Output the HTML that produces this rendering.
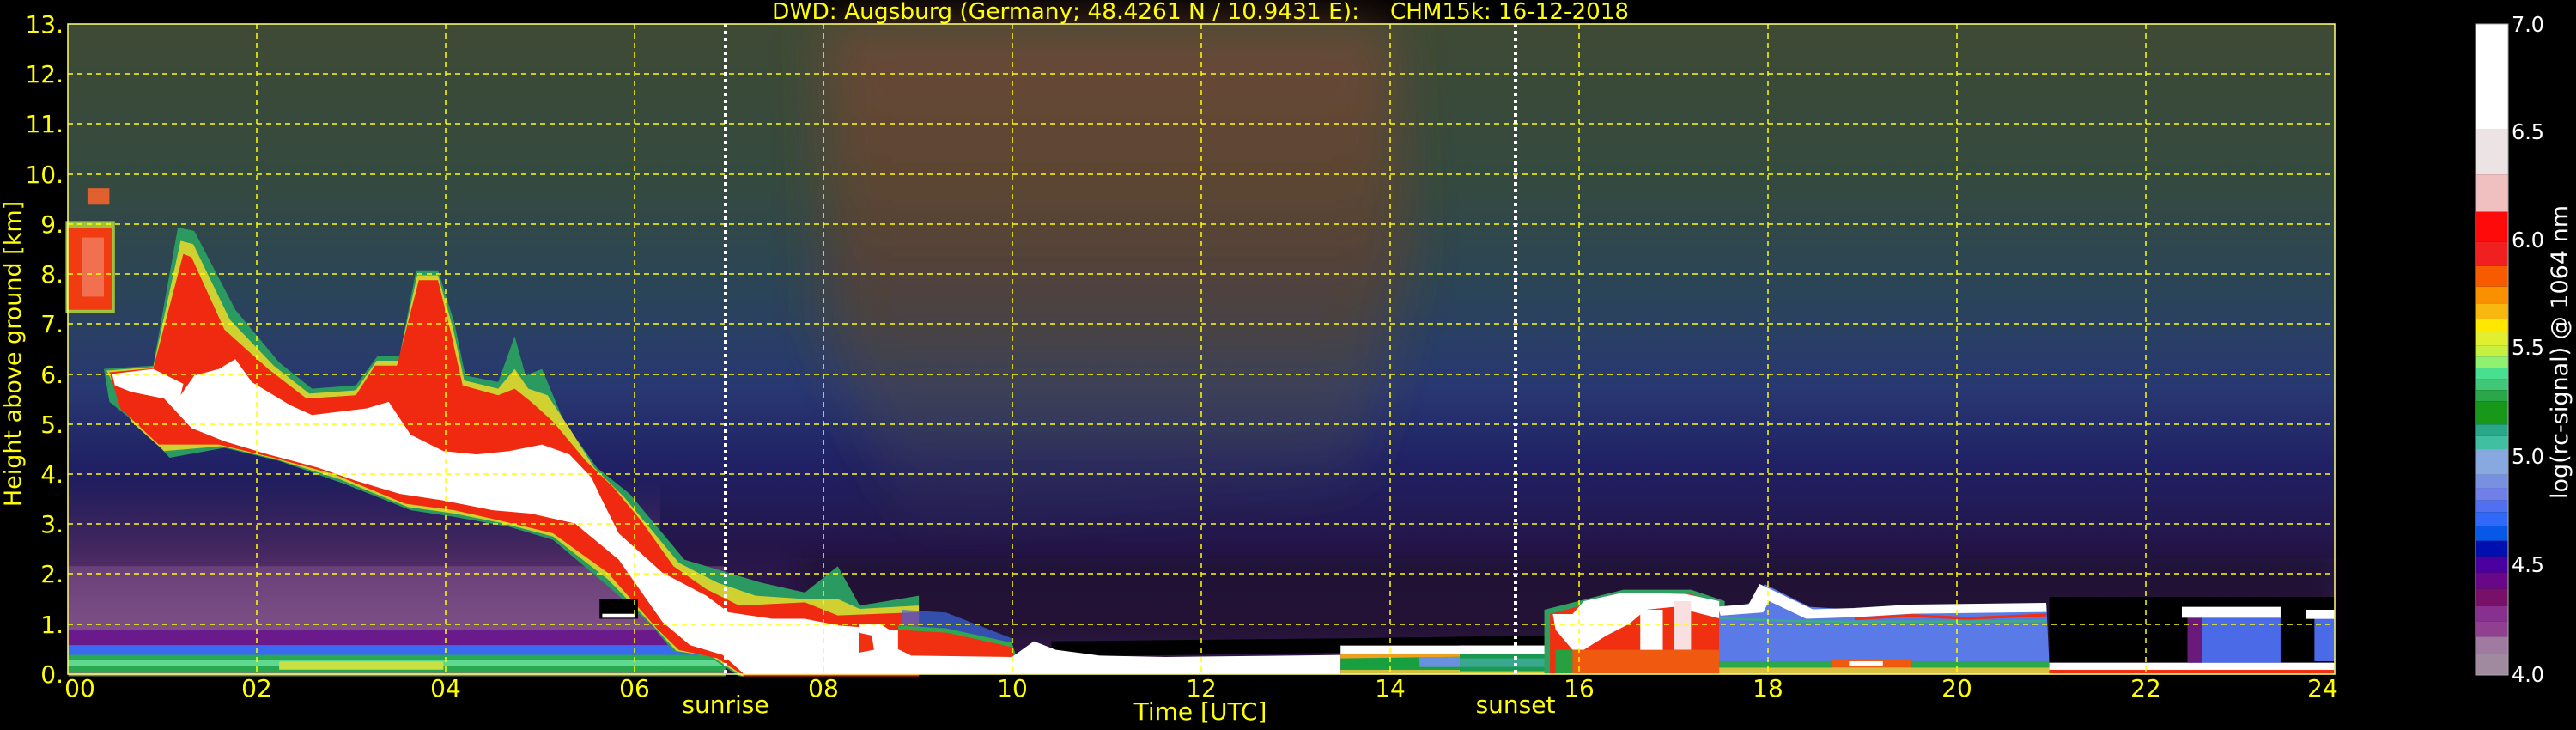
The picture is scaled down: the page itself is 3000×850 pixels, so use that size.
<!DOCTYPE html>
<html><head><meta charset="utf-8"><style>
html,body{margin:0;padding:0;background:#000;}
svg{display:block;}
text{font-family:"DejaVu Sans","Liberation Sans",sans-serif;}
</style></head><body>
<svg width="3000" height="850" viewBox="0 0 3000 850" xmlns="http://www.w3.org/2000/svg">
<defs>
<linearGradient id="bg" x1="0" y1="28" x2="0" y2="785" gradientUnits="userSpaceOnUse">
<stop offset="0" stop-color="#3e4a34"/>
<stop offset="0.25" stop-color="#344a40"/>
<stop offset="0.42" stop-color="#2a445a"/>
<stop offset="0.56" stop-color="#283872"/>
<stop offset="0.68" stop-color="#202064"/>
<stop offset="0.8" stop-color="#24164a"/>
<stop offset="0.9" stop-color="#32184a"/>
<stop offset="1" stop-color="#32184a"/>
</linearGradient>
<linearGradient id="pink" x1="0" y1="560" x2="0" y2="760" gradientUnits="userSpaceOnUse">
<stop offset="0" stop-color="#5a3a7a" stop-opacity="0"/>
<stop offset="0.5" stop-color="#6a3a78" stop-opacity="0.6"/>
<stop offset="1" stop-color="#8a5a92" stop-opacity="0.9"/>
</linearGradient>
<linearGradient id="redt" x1="0" y1="28" x2="0" y2="640" gradientUnits="userSpaceOnUse">
<stop offset="0" stop-color="#7a4a38" stop-opacity="0.75"/>
<stop offset="0.5" stop-color="#6e3e24" stop-opacity="0.55"/>
<stop offset="0.8" stop-color="#5a5a30" stop-opacity="0.25"/>
<stop offset="1" stop-color="#4a5a40" stop-opacity="0"/>
</linearGradient>
<filter id="blur" x="-10%" y="-10%" width="120%" height="120%"><feGaussianBlur stdDeviation="30"/></filter>
<filter id="b2" x="-10%" y="-50%" width="120%" height="200%"><feGaussianBlur stdDeviation="12"/></filter>
</defs>

<rect x="79" y="28" width="2640" height="757" fill="url(#bg)"/>
<polygon points="960,28 1620,28 1640,300 1580,560 1060,620 960,380" fill="url(#redt)" filter="url(#blur)"/>
<rect x="79" y="560" width="690" height="225" fill="url(#pink)"/>
<rect x="930" y="650" width="1790" height="100" fill="#140a22" opacity="0.5" filter="url(#b2)"/>

<g transform="translate(70,200) scale(0.6378,0.3827)">
 <rect x="15" y="1200" width="1200" height="240" fill="#8a5a92" opacity="0.45"/>
 <rect x="15" y="1395" width="1200" height="55" fill="#6a1a8a"/>
 <rect x="15" y="1440" width="1200" height="35" fill="#3a6af0"/>
 <rect x="15" y="1470" width="1200" height="50" fill="#28a850"/>
 <rect x="15" y="1485" width="1200" height="20" fill="#60d890"/>
 <rect x="400" y="1490" width="300" height="25" fill="#c8e040"/>
 <rect x="15" y="1520" width="1200" height="15" fill="#6a8a60"/>
 <rect x="10" y="150" width="90" height="280" fill="#a0c040"/>
 <rect x="15" y="170" width="80" height="250" fill="#f03c10"/>
 <rect x="40" y="200" width="40" height="180" fill="#f07050"/>
 <rect x="50" y="50" width="40" height="50" fill="#e06030"/>
 <polygon fill="#2a9a60" points="80,600 170,590 215,170 245,180 320,420 400,580 460,660 540,650 580,560 620,560 650,300 690,300 720,460 740,620 800,640 830,500 850,620 880,600 920,760 980,900 1040,980 1080,1060 1140,1180 1220,1220 1280,1250 1360,1280 1420,1200 1460,1320 1568,1290 1568,1535 1240,1535 1180,1470 1120,1460 1080,1380 1000,1260 900,1120 820,1080 720,1050 640,1030 520,950 400,880 300,840 200,870 150,780 90,700"/>
 <polygon fill="#d0d030" points="85,605 170,594 220,210 243,220 310,450 390,590 455,675 540,665 578,575 618,575 652,315 690,315 718,480 738,635 800,660 830,600 855,660 890,680 930,780 975,900 1030,990 1070,1070 1130,1190 1200,1250 1270,1290 1360,1300 1420,1300 1460,1330 1568,1320 1568,1535 1245,1535 1190,1475 1125,1458 1085,1385 1000,1240 900,1110 810,1070 720,1040 635,1020 510,935 395,875 295,835 190,850 130,760"/>
 <polygon fill="#f02a10" points="90,610 170,598 225,250 240,260 300,480 380,600 450,690 540,680 575,590 615,590 655,330 690,330 715,500 735,650 800,680 830,660 860,700 900,760 960,880 1010,960 1060,1060 1120,1200 1180,1270 1240,1320 1360,1310 1420,1350 1568,1340 1568,1535 1250,1535 1200,1480 1130,1455 1090,1390 1000,1220 900,1100 800,1060 720,1030 630,1010 500,920 390,870 290,830 180,830 110,720"/>
 <polygon fill="#ffffff" points="95,615 170,600 225,645 220,680 245,620 290,600 320,570 350,640 420,710 460,740 560,720 600,700 640,800 700,850 760,860 820,850 880,830 930,860 970,930 990,1000 1020,1100 1060,1160 1100,1220 1180,1290 1220,1340 1300,1360 1360,1360 1420,1380 1568,1400 1568,1530 1250,1530 1210,1470 1150,1440 1100,1370 1020,1180 940,1070 860,1040 790,1030 700,1000 620,980 540,940 470,900 380,860 300,820 240,780 190,690 130,670 100,650"/>
 <rect x="985" y="1300" width="70" height="60" fill="#000"/>
 <rect x="990" y="1345" width="60" height="12" fill="#fff"/>
</g>

<g transform="translate(1000,600) scale(0.5102,0.3333)">
 <polygon fill="#3a6ae0" points="100,330 200,340 350,430 350,470 100,440" opacity="0.7"/>
 <polygon fill="#000" points="440,440 1100,430 1568,420 1568,460 1100,480 440,495"/>
 <polygon fill="#30a850" points="90,385 200,395 350,445 360,495 90,490"/>
 <polygon fill="#f03010" points="90,400 200,410 350,460 355,495 90,495"/>
 <polygon fill="#f03010" points="0,395 40,400 40,490 0,495"/>
 <polygon fill="#ffffff" points="0,380 50,380 90,420 80,460 120,490 350,495 400,440 450,470 550,490 700,495 1100,488 1100,555 0,555"/>
 <polygon fill="#f03010" points="0,410 30,420 35,470 0,480"/>
 <rect x="1100" y="455" width="468" height="30" fill="#ffffff"/>
 <polygon fill="#f0a020" points="1100,485 1568,485 1568,500 1100,520"/>
 <polygon fill="#18a040" points="1100,500 1568,490 1568,545 1100,545"/>
 <rect x="1280" y="495" width="200" height="35" fill="#6a90e0"/>
 <rect x="1100" y="540" width="468" height="15" fill="#d0c040"/>
</g>

<g transform="translate(1700,600) scale(0.657,0.3333)">
 <rect x="0" y="455" width="165" height="30" fill="#ffffff"/>
 <rect x="0" y="485" width="165" height="60" fill="#1a9a50"/>
 <rect x="0" y="500" width="165" height="30" fill="#3aa890"/>
 <rect x="0" y="545" width="165" height="10" fill="#d0d040"/>
 <polygon fill="#30a060" points="150,330 290,260 410,260 470,300 460,555 150,555"/>
 <polygon fill="#f03010" points="160,345 290,275 410,275 460,310 460,555 160,555"/>
 <polygon fill="#ffffff" points="165,345 200,345 220,300 290,270 400,275 460,300 460,360 420,340 380,320 330,330 300,380 260,420 220,470 200,470 170,400"/>
 <rect x="320" y="330" width="40" height="150" fill="#ffffff"/>
 <rect x="380" y="300" width="30" height="170" fill="#f8e0e0"/>
 <rect x="200" y="470" width="260" height="85" fill="#f05a10"/>
 <rect x="170" y="470" width="30" height="85" fill="#28a040"/>
 <polygon fill="#5a7ae8" points="460,330 530,300 540,240 620,320 700,330 1040,310 1045,520 460,530"/>
 <polyline fill="none" stroke="#ffffff" stroke-width="32" points="460,335 525,325 540,270 620,345 700,340 800,328 1040,322"/>
 <polyline fill="none" stroke="#f03010" stroke-width="10" points="700,362 800,350 900,360 1040,348"/>
 <polyline fill="none" stroke="#30c060" stroke-width="8" points="460,360 600,370 700,372 1040,370" opacity="0.7"/>
 <rect x="460" y="510" width="585" height="22" fill="#28a848"/>
 <rect x="660" y="505" width="140" height="35" fill="#f05a10"/>
 <rect x="690" y="510" width="60" height="15" fill="#fff"/>
 <rect x="460" y="532" width="585" height="23" fill="#d8c040"/>
 <rect x="1045" y="285" width="505" height="230" fill="#000"/>
 <rect x="1045" y="515" width="505" height="25" fill="#ffffff"/>
 <rect x="1045" y="540" width="505" height="15" fill="#f03010"/>
 <rect x="1290" y="355" width="165" height="160" fill="#4a6ae8"/>
 <rect x="1290" y="355" width="25" height="160" fill="#6a1a7a"/>
 <rect x="1280" y="320" width="175" height="38" fill="#ffffff"/>
 <rect x="1515" y="360" width="35" height="150" fill="#4a6ae8"/>
 <rect x="1500" y="330" width="50" height="32" fill="#ffffff"/>
</g>

<g stroke="#ffff00" stroke-width="1.5" stroke-dasharray="6,5" fill="none">
 <line x1="79" y1="727" x2="2719" y2="727"/><line x1="79" y1="668" x2="2719" y2="668"/>
 <line x1="79" y1="610" x2="2719" y2="610"/><line x1="79" y1="552" x2="2719" y2="552"/>
 <line x1="79" y1="494" x2="2719" y2="494"/><line x1="79" y1="436" x2="2719" y2="436"/>
 <line x1="79" y1="377" x2="2719" y2="377"/><line x1="79" y1="319" x2="2719" y2="319"/>
 <line x1="79" y1="261" x2="2719" y2="261"/><line x1="79" y1="203" x2="2719" y2="203"/>
 <line x1="79" y1="144" x2="2719" y2="144"/><line x1="79" y1="86" x2="2719" y2="86"/>
 <line x1="299" y1="28" x2="299" y2="785"/><line x1="519" y1="28" x2="519" y2="785"/>
 <line x1="739" y1="28" x2="739" y2="785"/><line x1="959" y1="28" x2="959" y2="785"/>
 <line x1="1179" y1="28" x2="1179" y2="785"/><line x1="1399" y1="28" x2="1399" y2="785"/>
 <line x1="1619" y1="28" x2="1619" y2="785"/><line x1="1839" y1="28" x2="1839" y2="785"/>
 <line x1="2059" y1="28" x2="2059" y2="785"/><line x1="2279" y1="28" x2="2279" y2="785"/>
 <line x1="2499" y1="28" x2="2499" y2="785"/>
</g>
<g stroke="#ffffff" stroke-width="4" stroke-dasharray="4,4">
 <line x1="845" y1="28" x2="845" y2="785"/>
 <line x1="1765" y1="28" x2="1765" y2="785"/>
</g>
<rect x="79" y="28" width="2640" height="757" fill="none" stroke="#ffff80" stroke-width="1.5"/>

<text x="899" y="22" font-size="26" fill="#ffff00" textLength="684" lengthAdjust="spacingAndGlyphs">DWD: Augsburg (Germany; 48.4261 N / 10.9431 E):</text>
<text x="1619" y="22" font-size="26" fill="#ffff00" textLength="278" lengthAdjust="spacingAndGlyphs">CHM15k: 16-12-2018</text>
<g font-size="28" fill="#ffff00" text-anchor="end">
 <text x="74" y="795">0.</text><text x="74" y="737">1.</text><text x="74" y="678">2.</text>
 <text x="74" y="620">3.</text><text x="74" y="562">4.</text><text x="74" y="504">5.</text>
 <text x="74" y="446">6.</text><text x="74" y="387">7.</text><text x="74" y="329">8.</text>
 <text x="74" y="271">9.</text><text x="74" y="213">10.</text><text x="74" y="154">11.</text>
 <text x="74" y="96">12.</text><text x="74" y="38">13.</text>
</g>
<g font-size="28" fill="#ffff00" text-anchor="middle">
 <text x="93" y="811">00</text><text x="299" y="811">02</text><text x="519" y="811">04</text>
 <text x="739" y="811">06</text><text x="959" y="811">08</text><text x="1179" y="811">10</text>
 <text x="1399" y="811">12</text><text x="1619" y="811">14</text><text x="1839" y="811">16</text>
 <text x="2059" y="811">18</text><text x="2279" y="811">20</text><text x="2499" y="811">22</text>
 <text x="2705" y="811">24</text>
 <text x="845" y="830">sunrise</text>
 <text x="1398" y="838">Time [UTC]</text>
 <text x="1765" y="830">sunset</text>
</g>
<text transform="translate(24,412) rotate(-90)" font-size="27" fill="#ffff00" text-anchor="middle">Height above ground [km]</text>

<svg x="2883" y="28" width="38" height="758" viewBox="0 52 100 1398" preserveAspectRatio="none">
 <rect x="0" y="52" width="100" height="225" fill="#ffffff"/>
 <rect x="0" y="277" width="100" height="98" fill="#ece4e4"/>
 <rect x="0" y="375" width="100" height="80" fill="#f0c0c0"/>
 <rect x="0" y="455" width="100" height="65" fill="#ff0a0a"/>
 <rect x="0" y="520" width="100" height="52" fill="#f02020"/>
 <rect x="0" y="572" width="100" height="44" fill="#f85a00"/>
 <rect x="0" y="616" width="100" height="36" fill="#f89000"/>
 <rect x="0" y="652" width="100" height="33" fill="#f8b810"/>
 <rect x="0" y="685" width="100" height="29" fill="#ffe800"/>
 <rect x="0" y="714" width="100" height="28" fill="#e0f030"/>
 <rect x="0" y="742" width="100" height="24" fill="#c8f040"/>
 <rect x="0" y="766" width="100" height="24" fill="#90f070"/>
 <rect x="0" y="790" width="100" height="25" fill="#48e090"/>
 <rect x="0" y="815" width="100" height="23" fill="#40c878"/>
 <rect x="0" y="838" width="100" height="24" fill="#28a848"/>
 <rect x="0" y="862" width="100" height="50" fill="#189818"/>
 <rect x="0" y="912" width="100" height="25" fill="#28a888"/>
 <rect x="0" y="937" width="100" height="28" fill="#40c0a0"/>
 <rect x="0" y="965" width="100" height="55" fill="#88a8e0"/>
 <rect x="0" y="1020" width="100" height="28" fill="#7890e0"/>
 <rect x="0" y="1048" width="100" height="27" fill="#7080e8"/>
 <rect x="0" y="1075" width="100" height="25" fill="#5070f0"/>
 <rect x="0" y="1100" width="100" height="30" fill="#3068f8"/>
 <rect x="0" y="1130" width="100" height="32" fill="#0858e8"/>
 <rect x="0" y="1162" width="100" height="33" fill="#0010b0"/>
 <rect x="0" y="1195" width="100" height="35" fill="#4a00a0"/>
 <rect x="0" y="1230" width="100" height="35" fill="#680888"/>
 <rect x="0" y="1265" width="100" height="37" fill="#781068"/>
 <rect x="0" y="1302" width="100" height="33" fill="#883090"/>
 <rect x="0" y="1335" width="100" height="33" fill="#904090"/>
 <rect x="0" y="1368" width="100" height="37" fill="#a07aa0"/>
 <rect x="0" y="1405" width="100" height="45" fill="#a08aa0"/>
</svg>
<rect x="2883" y="28" width="38" height="758" fill="none" stroke="#aaaaaa" stroke-width="1"/>
<g font-size="25" fill="#ffffff">
 <text x="2925" y="37" textLength="38" lengthAdjust="spacingAndGlyphs">7.0</text>
 <text x="2925" y="162" textLength="38" lengthAdjust="spacingAndGlyphs">6.5</text>
 <text x="2925" y="288" textLength="38" lengthAdjust="spacingAndGlyphs">6.0</text>
 <text x="2925" y="413" textLength="38" lengthAdjust="spacingAndGlyphs">5.5</text>
 <text x="2925" y="540" textLength="38" lengthAdjust="spacingAndGlyphs">5.0</text>
 <text x="2925" y="666" textLength="38" lengthAdjust="spacingAndGlyphs">4.5</text>
 <text x="2925" y="794" textLength="38" lengthAdjust="spacingAndGlyphs">4.0</text>
</g>
<text transform="translate(2990,410) rotate(-90)" font-size="27" fill="#ffffff" text-anchor="middle">log(rc-signal) @ 1064 nm</text>
</svg>
</body></html>
